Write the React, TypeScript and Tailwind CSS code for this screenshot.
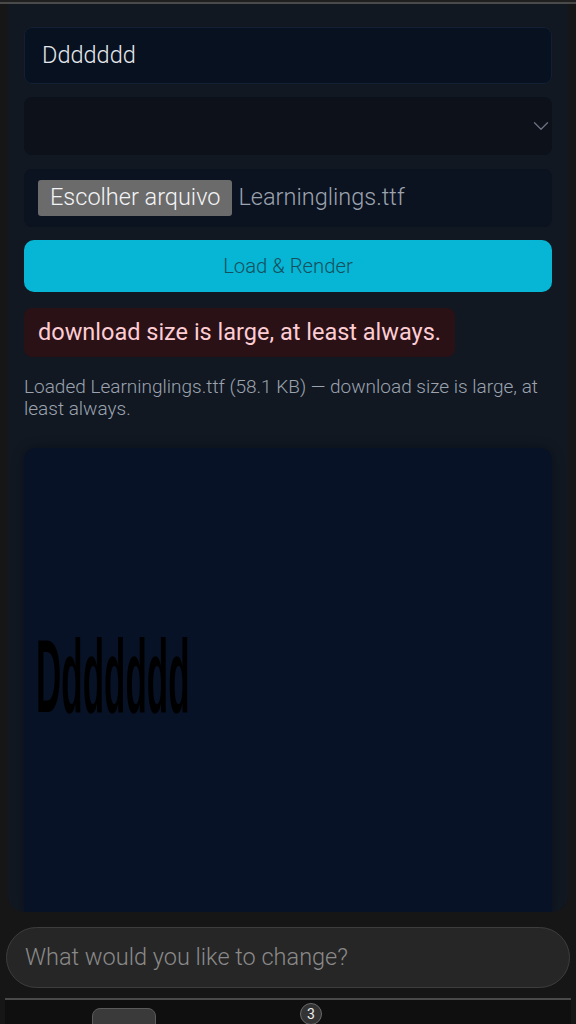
import { ChevronDown } from "lucide-react";

export default function App() {
  return (
    <div
      className="flex h-[1024px] w-[576px] flex-col overflow-hidden bg-[#161616]"
      style={{ fontFamily: "Roboto, 'Noto Sans', sans-serif" }}
    >
      <div className="h-[2px] bg-[#1f1f1f]" />
      <div className="h-[2px] bg-[#4a4a4a]" />

      {/* main panel */}
      <div className="mx-2 flex h-[908px] flex-col overflow-hidden rounded-b-2xl bg-[#111822] px-4 pt-[23px]">
        <div className="flex h-[57px] items-center rounded-lg border border-[#132033] bg-[#08111f] px-[17px] text-[23.5px] font-light text-[#e5e7eb]">
          Ddddddd
        </div>

        <div className="mt-[13px] flex h-[58px] items-center justify-end rounded-lg bg-[#0c111a] pr-0">
          <ChevronDown className="-mr-[2px] h-[26px] w-[26px] text-[#6b7280]" strokeWidth={1.2} />
        </div>

        <div className="mt-[14px] flex h-[58px] items-center gap-[6px] rounded-lg bg-[#0b1220] px-[14px]">
          <span className="flex h-[36px] items-center rounded-[3px] bg-[#6b6b6b] px-[12px] text-[23.5px] font-light text-[#f3f4f6]">
            Escolher arquivo
          </span>
          <span className="text-[23.5px] font-light text-[#9ca3af]">Learninglings.ttf</span>
        </div>

        <button className="mt-[13px] flex h-[52px] items-center justify-center rounded-[10px] bg-[#06b6d4] text-[20.3px] font-light text-[#14505e]">
          Load &amp; Render
        </button>

        <div className="mt-[16px] self-start rounded-lg bg-[#2a1116] px-[14px] py-[11px] text-[23.5px] leading-[27px] text-[#fecdd3]">
          download size is large, at least always.
        </div>

        <p className="mt-[19px] text-[19px] leading-[22px] font-light text-[#9ca3af]">
          Loaded Learninglings.ttf (58.1 KB) — download size is large, at least always.
        </p>

        <div className="mt-[28px] flex flex-1 items-center rounded-t-xl bg-[#081226] shadow-[0_0_12px_rgba(0,0,0,0.35)]">
          <span
            className="ml-[12px] -mt-[8px] origin-left scale-x-[0.34] text-[103px] leading-none font-bold whitespace-nowrap text-black"
            style={{ fontFamily: "'Liberation Sans', Arial, sans-serif" }}
          >
            Ddddddd
          </span>
        </div>
      </div>

      {/* chat input */}
      <div className="mx-[6px] mt-[15px] flex h-[61px] items-center rounded-full border border-[#3d3d3d] bg-[#262626] px-[18px] text-[23.5px] font-light text-[#8a8a8a]">
        What would you like to change?
      </div>

      {/* bottom bar */}
      <div className="mx-[5px] mt-[10px] flex-1 border-t-2 border-[#4a4a4a] bg-[#0f0f0f]">
        <div className="relative h-full">
          <div className="absolute top-[8px] left-[87px] h-[30px] w-[64px] rounded-t-lg border border-[#5a5a5a] bg-[#3a3a3a]" />
          <div className="absolute top-[3px] left-[295px] flex h-[22px] w-[22px] items-center justify-center rounded-full border border-[#6a6a6a] bg-[#333333] text-[14px] text-[#eeeeee]">
            3
          </div>
        </div>
      </div>
    </div>
  );
}
